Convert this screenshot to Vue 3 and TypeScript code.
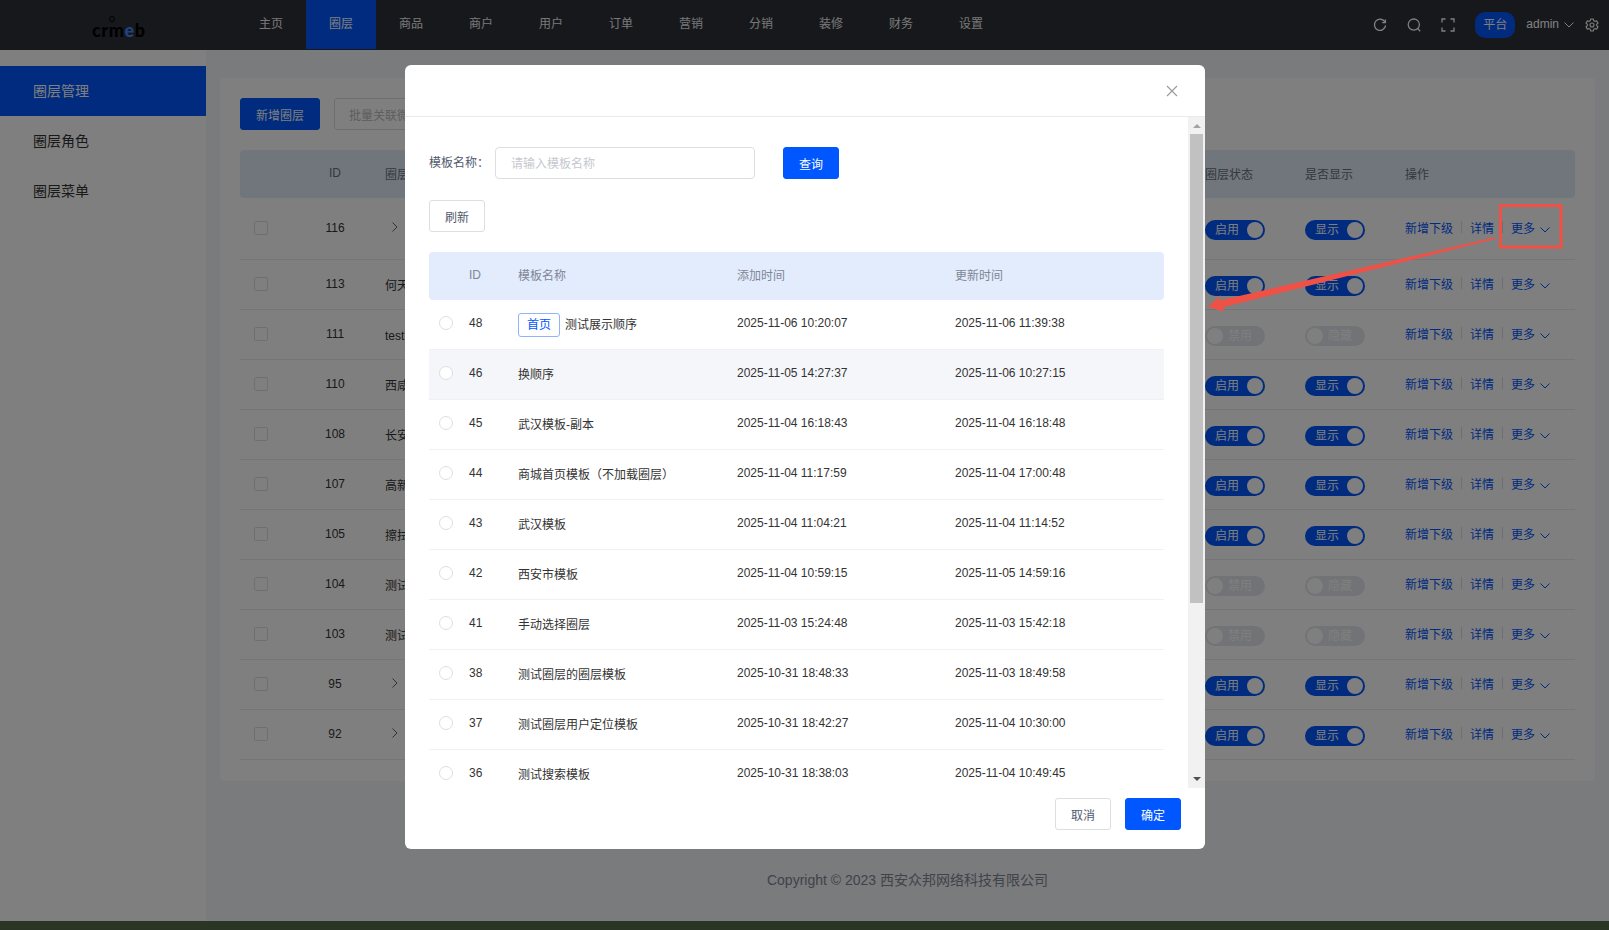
<script setup lang="ts">
interface PageRow { id: number; name: string; expand: boolean; on: boolean }
interface TplRow { id: number; name: string; add: string; up: string; tag?: string }

const navItems: string[] = ['主页', '圈层', '商品', '商户', '用户', '订单', '营销', '分销', '装修', '财务', '设置']
const sideItems: string[] = ['圈层管理', '圈层角色', '圈层菜单']
const pageRows: PageRow[] = [
  { id: 116, name: '', expand: true, on: true },
  { id: 113, name: '何天圈层', expand: false, on: true },
  { id: 111, name: 'test圈层', expand: false, on: false },
  { id: 110, name: '西咸新区', expand: false, on: true },
  { id: 108, name: '长安区', expand: false, on: true },
  { id: 107, name: '高新区', expand: false, on: true },
  { id: 105, name: '擦拭圈层', expand: false, on: true },
  { id: 104, name: '测试圈层', expand: false, on: false },
  { id: 103, name: '测试圈层', expand: false, on: false },
  { id: 95, name: '', expand: true, on: true },
  { id: 92, name: '', expand: true, on: true }
]
const tplRows: TplRow[] = [
  { id: 48, name: '测试展示顺序', add: '2025-11-06 10:20:07', up: '2025-11-06 11:39:38', tag: '首页' },
  { id: 46, name: '换顺序', add: '2025-11-05 14:27:37', up: '2025-11-06 10:27:15' },
  { id: 45, name: '武汉模板-副本', add: '2025-11-04 16:18:43', up: '2025-11-04 16:18:48' },
  { id: 44, name: '商城首页模板（不加载圈层）', add: '2025-11-04 11:17:59', up: '2025-11-04 17:00:48' },
  { id: 43, name: '武汉模板', add: '2025-11-04 11:04:21', up: '2025-11-04 11:14:52' },
  { id: 42, name: '西安市模板', add: '2025-11-04 10:59:15', up: '2025-11-05 14:59:16' },
  { id: 41, name: '手动选择圈层', add: '2025-11-03 15:24:48', up: '2025-11-03 15:42:18' },
  { id: 38, name: '测试圈层的圈层模板', add: '2025-10-31 18:48:33', up: '2025-11-03 18:49:58' },
  { id: 37, name: '测试圈层用户定位模板', add: '2025-10-31 18:42:27', up: '2025-11-04 10:30:00' },
  { id: 36, name: '测试搜索模板', add: '2025-10-31 18:38:03', up: '2025-11-04 10:49:45' }
]
</script>

<template>
  <div class="page">
    <header class="topbar">
      <div class="logo"><span class="logo-head"></span>crm<span class="logo-e">e</span>b</div>
      <nav class="nav">
        <a v-for="(n, i) in navItems" :key="n" class="nav-item" :class="{ active: i === 1 }">{{ n }}</a>
      </nav>
      <div class="tools">
        <svg class="tool" viewBox="0 0 14 14" width="14" height="14"><path d="M12 4.200A5.600 5.600 0 1 0 12.600 7.400M12.400 1.400v3.200H9.200" fill="none" stroke="currentColor" stroke-width="1.300"/></svg>
        <svg class="tool" viewBox="0 0 14 14" width="14" height="14"><circle cx="6.800" cy="6.600" r="5.600" fill="none" stroke="currentColor" stroke-width="1.300"/><path d="M10.800 10.600l2.400 2.600" stroke="currentColor" stroke-width="1.300"/></svg>
        <svg class="tool" viewBox="0 0 14 14" width="14" height="14"><path d="M1 4.500V1h3.500M9.500 1H13v3.500M13 9.500V13H9.500M4.500 13H1V9.500" fill="none" stroke="currentColor" stroke-width="1.300"/></svg>
        <span class="platform">平台</span>
        <span class="admin">admin</span>
        <svg class="admin-caret" viewBox="0 0 10 6" width="10" height="6"><path d="M.5.5L5 5 9.500.5" fill="none" stroke="currentColor"/></svg>
        <svg class="gear" viewBox="0 0 14 14" width="14" height="14"><path d="M5.700 1h2.600l.4 1.700 1.300.7 1.700-.5 1.300 2.200-1.300 1.200v1.400l1.300 1.200-1.300 2.200-1.700-.5-1.300.7L8.300 13H5.700l-.4-1.700-1.300-.7-1.700.5L1 8.900l1.300-1.200V6.300L1 5.100l1.300-2.200 1.700.5 1.300-.7z" fill="none" stroke="currentColor" stroke-width="1.100"/><circle cx="7" cy="7" r="2" fill="none" stroke="currentColor" stroke-width="1.100"/></svg>
      </div>
    </header>

    <div class="body">
      <aside class="side">
        <a v-for="(s, i) in sideItems" :key="s" class="side-item" :class="{ active: i === 0 }">{{ s }}</a>
      </aside>
      <main class="main">
        <section class="card">
          <div class="toolbar">
            <button class="btn primary-page">新增圈层</button>
            <button class="btn batch">批量关联微信社群</button>
          </div>
          <div class="ptable">
            <div class="pgrid phead">
              <span></span><span class="center">ID</span><span class="pname">圈层名称</span>
              <span>圈层状态</span><span>是否显示</span><span>操作</span>
            </div>
            <div v-for="(r, i) in pageRows" :key="r.id" class="pgrid prow" :class="{ tall: i === 0 }">
              <span class="cbcell"><i class="checkbox"></i></span>
              <span class="center">{{ r.id }}</span>
              <span class="pname">
                <svg v-if="r.expand" class="expand" viewBox="0 0 6 10" width="6" height="10"><path d="M.5.5L5 5 .5 9.500" fill="none" stroke="currentColor"/></svg>
                {{ r.name }}
              </span>
              <span><span class="switch" :class="{ off: !r.on }"><em>{{ r.on ? '启用' : '禁用' }}</em><b></b></span></span>
              <span><span class="switch" :class="{ off: !r.on }"><em>{{ r.on ? '显示' : '隐藏' }}</em><b></b></span></span>
              <span class="ops">
                <a>新增下级</a><i></i><a>详情</a><i></i><a>更多</a>
                <svg class="more" viewBox="0 0 10 6" width="10" height="6"><path d="M.5.5L5 5 9.500.5" fill="none" stroke="currentColor"/></svg>
              </span>
            </div>
          </div>
        </section>
        <footer class="copyright">Copyright © 2023 西安众邦网络科技有限公司</footer>
      </main>
    </div>
    <div class="strip"></div>

    <div class="mask"></div>

    <div class="modal">
      <div class="m-head">
        <svg class="close" viewBox="0 0 12 12" width="12" height="12"><path d="M1 1l10 10M11 1L1 11" stroke="currentColor" stroke-width="1.100"/></svg>
      </div>
      <div class="m-scroll">
        <div class="m-content">
          <div class="m-form">
            <label>模板名称：</label>
            <div class="input">请输入模板名称</div>
            <button class="btn primary">查询</button>
          </div>
          <button class="btn plain refresh">刷新</button>
          <div class="mgrid mhead">
            <span></span><span>ID</span><span>模板名称</span><span>添加时间</span><span>更新时间</span>
          </div>
          <div v-for="(t, i) in tplRows" :key="t.id" class="mgrid mrow" :class="{ stripe: i === 1 }">
            <span><i class="radio"></i></span>
            <span>{{ t.id }}</span>
            <span class="mname"><em v-if="t.tag" class="tag">{{ t.tag }}</em>{{ t.name }}</span>
            <span>{{ t.add }}</span>
            <span>{{ t.up }}</span>
          </div>
        </div>
        <div class="bar">
          <i class="tri up"></i>
          <div class="track"><div class="thumb"></div></div>
          <i class="tri down"></i>
        </div>
      </div>
      <div class="m-foot">
        <button class="btn plain">取消</button>
        <button class="btn primary">确定</button>
      </div>
    </div>

    <svg class="annot" width="1609" height="930" viewBox="0 0 1609 930">
      <rect x="1500.500" y="205.500" width="60.500" height="41.500" fill="none" stroke="#ef5146" stroke-width="3"/>
      <path d="M1208 306.700L1220.700 295L1218.300 300.700L1495 237.300L1495 239L1223.300 307.300L1224 311.700Z" fill="#ef5146"/>
    </svg>
  </div>
</template>

<style>
html, body { margin: 0; background: #fff; }
</style>

<style scoped>
.page {
  position: relative;
  width: 1609px;
  height: 930px;
  overflow: hidden;
  display: flex;
  flex-direction: column;
  font-family: "Liberation Sans", "Noto Sans CJK SC", sans-serif;
  font-size: 12px;
  color: #333;
  background: #f4f6f9;
}
.topbar {
  height: 50px;
  flex: none;
  display: flex;
  align-items: center;
  background: #2e3038;
  color: #fff;
}
.logo {
  position: relative;
  width: 236px;
  padding-left: 92px;
  box-sizing: border-box;
  font-family: Lato, sans-serif;
  font-weight: 900;
  font-size: 18px;
  line-height: 18px;
  letter-spacing: .6px;
  margin-top: 10px;
  color: #000;
}
.logo-e { color: #3f88ff; }
.logo-head {
  position: absolute;
  left: 109px;
  top: -5px;
  width: 6px;
  height: 6px;
  border: 1.500px solid #000;
  border-radius: 50%;
  box-sizing: border-box;
}
.nav { display: flex; height: 50px; flex: none; }
.nav-item {
  width: 70px;
  height: 49px;
  line-height: 48px;
  text-align: center;
  color: #fff;
  opacity: .92;
}
.nav-item.active { background: #0056ff; opacity: 1; }
.tools {
  flex: 1;
  display: flex;
  align-items: center;
  justify-content: flex-end;
  color: #fff;
  padding-right: 10px;
}
.tool { margin-right: 20px; }
.platform {
  width: 40px;
  height: 26px;
  line-height: 26px;
  text-align: center;
  border-radius: 10px;
  background: #0056ff;
  color: #fff;
}
.admin { margin-left: 11px; margin-bottom: 2px; }
.admin-caret { margin-left: 5px; }
.gear { margin-left: 11px; }

.body { flex: 1; display: flex; min-height: 0; }
.side {
  width: 206px;
  flex: none;
  padding-top: 16px;
  background: #fff;
  box-sizing: border-box;
}
.side-item {
  display: block;
  height: 50px;
  line-height: 51px;
  padding-left: 33px;
  font-size: 14px;
  color: #333;
}
.side-item.active { background: #0056ff; color: #fff; }
.main { flex: 1; padding: 28px 14px 0; display: flex; flex-direction: column; min-width: 0; }
.card {
  height: 703px;
  padding: 20px;
  box-sizing: border-box;
  background: #fff;
  border-radius: 4px;
}
.toolbar { display: flex; gap: 14px; }
.btn {
  height: 32px;
  padding: 0;
  border-radius: 3px;
  font: inherit;
  font-size: 12px;
  cursor: pointer;
  box-sizing: border-box;
}
.primary-page { width: 80px; border: 1px solid #0056ff; background: #0056ff; color: #fff; }
.batch { width: 200px; border: 1px solid #dcdee2; background: #fff; color: #bbb; text-align: left; padding-left: 14px; }
.ptable { margin-top: 20px; }
.pgrid {
  display: grid;
  grid-template-columns: 60px 70px 835px 100px 100px 170px;
  align-items: center;
}
.phead {
  height: 48px;
  padding-bottom: 2px;
  box-sizing: border-box;
  background: #e2ecfb;
  color: #666f80;
  border-radius: 4px;
}
.prow { height: 50px; padding-bottom: 1px; border-bottom: 1px solid #e8eaec; box-sizing: border-box; color: #333; }
.prow.tall { height: 62px; }
.center { text-align: center; }
.pname { padding-left: 15px; position: relative; }
.expand { position: absolute; left: 22px; top: 50%; margin-top: -6px; color: #666; }
.cbcell { padding-left: 14px; display: flex; }
.checkbox {
  width: 14px;
  height: 14px;
  border: 1px solid #dcdee2;
  border-radius: 2px;
  box-sizing: border-box;
  background: #fff;
}
.switch {
  position: relative;
  display: block;
  width: 60px;
  height: 20px;
  margin-top: 3px;
  border-radius: 10px;
  background: #0056ff;
}
.switch em {
  position: absolute;
  left: 10px;
  top: 0;
  font-style: normal;
  line-height: 20px;
  color: #fff;
}
.switch b {
  position: absolute;
  right: 2px;
  top: 2px;
  width: 16px;
  height: 16px;
  border-radius: 50%;
  background: #fff;
}
.switch.off { background: #e4e6ec; }
.switch.off em { left: 23px; color: #fff; }
.switch.off b { right: auto; left: 2px; }
.ops { display: flex; align-items: center; padding-bottom: 2px; color: #0056ff; }
.ops i { width: 1px; height: 12px; margin: 0 8px; background: #dcdee2; }
.more { margin: 5px 0 0 5px; }

.copyright {
  margin-top: 90px;
  text-align: center;
  font-size: 14px;
  line-height: 18px;
  color: #808695;
}
.strip { height: 9px; flex: none; background: #566a49; }
.mask { position: absolute; inset: 0; background: rgba(0, 0, 0, .5); }

.modal {
  position: absolute;
  left: 405px;
  top: 65px;
  width: 800px;
  height: 784px;
  background: #fff;
  border-radius: 6px;
  overflow: hidden;
  display: flex;
  flex-direction: column;
}
.m-head {
  height: 52px;
  flex: none;
  box-sizing: border-box;
  border-bottom: 1px solid #e8eaec;
  position: relative;
  color: #999;
}
.close { position: absolute; right: 27px; top: 20px; }
.m-scroll { height: 671px; flex: none; display: flex; overflow: hidden; }
.m-content { flex: 1; padding: 30px 24px 0; overflow: hidden; min-width: 0; }
.m-form { display: flex; align-items: center; }
.m-form label { width: 66px; padding-bottom: 3px; color: #515a6e; }
.input {
  width: 260px;
  height: 32px;
  line-height: 32px;
  padding-left: 15px;
  border: 1px solid #dcdee2;
  border-radius: 4px;
  box-sizing: border-box;
  color: #c5c8ce;
}
.btn.primary { width: 56px; border: 1px solid #0056ff; background: #0056ff; color: #fff; }
.m-form .primary { margin-left: 28px; }
.btn.plain { width: 56px; border: 1px solid #dcdee2; background: #fff; color: #515a6e; }
.refresh { display: block; margin-top: 21px; }
.mgrid {
  display: grid;
  grid-template-columns: 40px 49px 219px 218px 209px;
  align-items: center;
}
.mgrid > span:first-child { padding-left: 10px; display: flex; }
.mhead {
  margin-top: 20px;
  height: 48px;
  padding-bottom: 3px;
  box-sizing: border-box;
  background: #e2ecfd;
  border-radius: 4px;
  color: #808695;
}
.mrow {
  height: 50px;
  padding-bottom: 3px;
  box-sizing: border-box;
  border-bottom: 1px solid #f0f1f4;
  color: #333;
}
.mrow.stripe { background: #f5f6fa; }
.radio {
  width: 14px;
  height: 14px;
  border: 1px solid #dcdee2;
  border-radius: 50%;
  box-sizing: border-box;
  background: #fff;
}
.mname { display: flex; align-items: center; white-space: nowrap; }
.tag {
  width: 42px;
  height: 24px;
  line-height: 22px;
  box-sizing: border-box;
  margin: 4px 5px 0 0;
  text-align: center;
  font-style: normal;
  color: #0056ff;
  border: 1px solid #8fb3ff;
  border-radius: 3px;
}
.bar {
  width: 17px;
  flex: none;
  background: #f1f1f1;
  display: flex;
  flex-direction: column;
  align-items: center;
}
.tri { width: 0; height: 0; border-left: 4px solid transparent; border-right: 4px solid transparent; flex: none; }
.tri.up { margin-top: 7px; margin-bottom: 6px; border-bottom: 4px solid #a3a3a3; }
.tri.down { margin-top: 5px; margin-bottom: 7px; border-top: 4px solid #505050; }
.track { flex: 1; width: 13px; min-height: 0; }
.thumb { height: 469px; background: #c1c1c1; }
.m-foot {
  flex: 1;
  padding: 10px 24px 0 0;
  display: flex;
  justify-content: flex-end;
  gap: 14px;
}
.annot { position: absolute; inset: 0; pointer-events: none; }
</style>
